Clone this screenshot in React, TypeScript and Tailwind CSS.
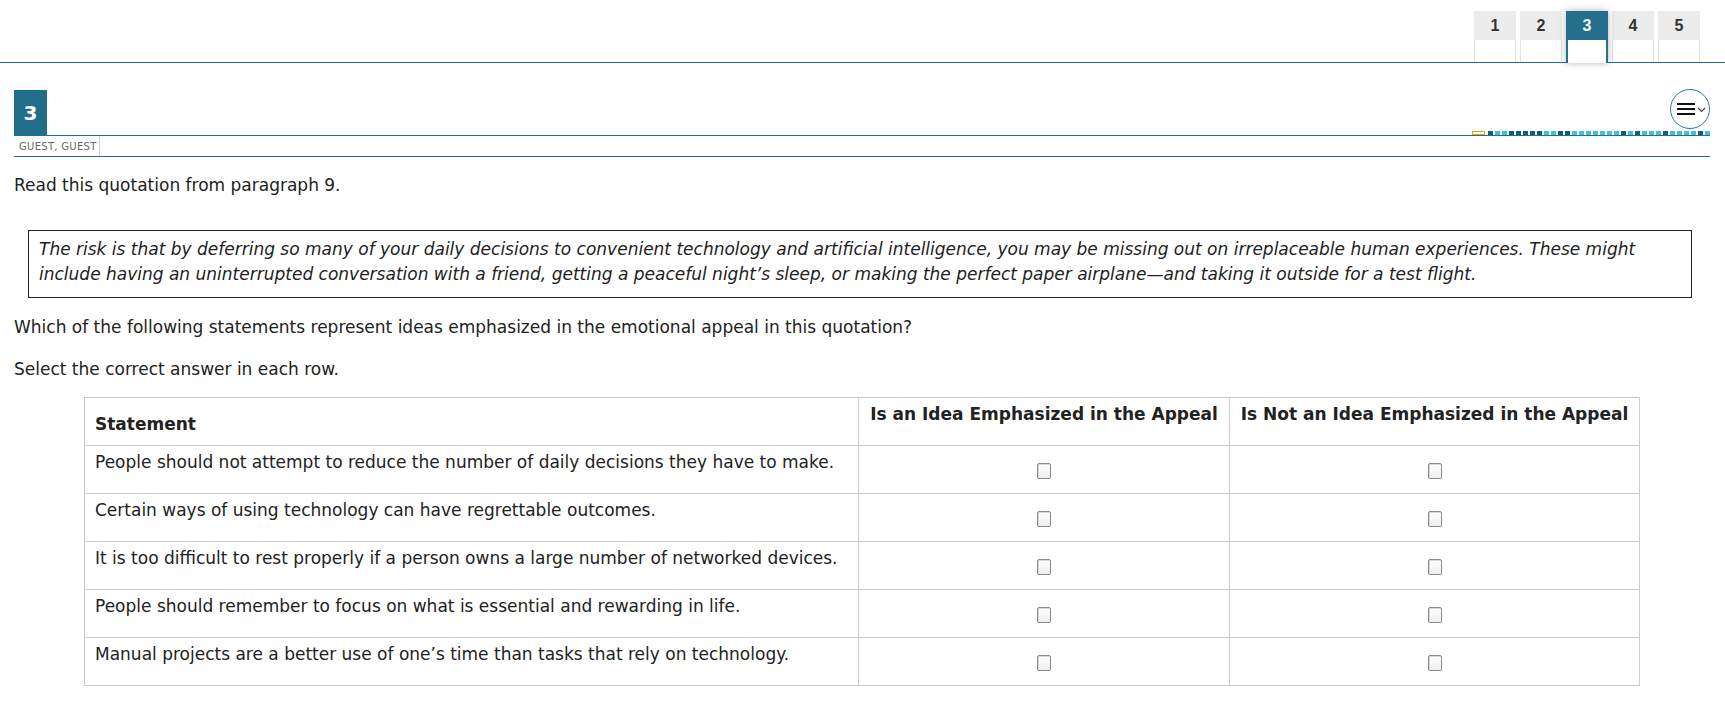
import React from 'react'

const tabs = [1, 2, 3, 4, 5]
const current = 3

// D = answered (dark), L = unanswered (light)
const progress = 'DLLDDDDDLLDDLLLLLLLDLDLLLDLLLLDL'

const statements = [
    'People should not attempt to reduce the number of daily decisions they have to make.',
    'Certain ways of using technology can have regrettable outcomes.',
    'It is too difficult to rest properly if a person owns a large number of networked devices.',
    'People should remember to focus on what is essential and rewarding in life.',
    'Manual projects are a better use of one\u2019s time than tasks that rely on technology.',
]

const Checkbox = () => (
    <span className="inline-block align-middle w-[14px] h-[16px] rounded-[2px] border border-[#8a8a8a] bg-gradient-to-b from-white to-[#eeeeee] shadow-[inset_1px_1px_0_#d8d8d8]" />
)

const MenuButton = () => (
    <div className="w-[40px] h-[40px] rounded-full border-[1.5px] border-[#2e7896] bg-white flex items-center justify-center pl-[2px]">
        <div className="flex flex-col gap-[3px]">
            <span className="block w-[18px] h-[2px] bg-[#111]" />
            <span className="block w-[18px] h-[2px] bg-[#111]" />
            <span className="block w-[18px] h-[2px] bg-[#111]" />
        </div>
        <svg width="9" height="6" viewBox="0 0 9 6" className="ml-[2px] mt-[1px]">
            <path d="M1 1l3.5 3.5L8 1" fill="none" stroke="#444" strokeWidth="1.2" />
        </svg>
    </div>
)

export default function App() {
    return (
        <div className="min-h-[720px] bg-white text-[#222] font-['DejaVu_Sans',Verdana,sans-serif]">
            {/* test tabs */}
            <div className="h-[63px] border-b border-[#1f6f8f] flex items-end justify-end gap-[4px] pr-[25px]">
                {tabs.map((t) =>
                    t === current ? (
                        <div
                            key={t}
                            className="w-[42px] h-[52px] -mb-px flex flex-col bg-white shadow-[0_0_7px_rgba(0,0,0,0.3)] relative z-10"
                        >
                            <div className="h-[29px] bg-[#236f8c] text-white flex items-center justify-center font-['Liberation_Sans',Arial,sans-serif] font-bold text-[16px]">
                                {t}
                            </div>
                            <div className="flex-1 border-x-2 border-[#236f8c] bg-white" />
                        </div>
                    ) : (
                        <div key={t} className="w-[42px] h-[51px] flex flex-col">
                            <div className="h-[29px] bg-[#ececec] text-[#333] flex items-center justify-center font-['Liberation_Sans',Arial,sans-serif] font-bold text-[16px]">
                                {t}
                            </div>
                            <div className="flex-1 border-x border-[#e3e3e3] bg-white" />
                        </div>
                    )
                )}
            </div>

            <div className="pl-[14px] pr-[15px]">
                {/* item header */}
                <div className="mt-[26px] flex items-end justify-between border-b border-[#1f6f8f]">
                    <div className="w-[33px] h-[45px] bg-[#216e8b] text-white font-bold text-[20px] flex items-center justify-center">
                        3
                    </div>
                    <div className="flex flex-col items-end gap-[2px]">
                        <MenuButton />
                        <div className="flex gap-[2px] items-end">
                            <span className="w-[13px] h-[4px] border border-[#f2a100] bg-white mr-[1px]" />
                            {progress.split('').map((c, i) => (
                                <span
                                    key={i}
                                    className={
                                        c === 'D'
                                            ? 'w-[5px] h-[4px] bg-[#0e5f7c]'
                                            : 'w-[5px] h-[4px] bg-[#3fc0dc]'
                                    }
                                />
                            ))}
                        </div>
                    </div>
                </div>
                <div className="h-[21px] flex border-b border-[#1f6f8f]">
                    <div className="w-[86px] border-r border-[#cfcfcf] pl-[5px] flex items-center text-[10px] text-[#666] tracking-[0.3px]">
                        GUEST, GUEST
                    </div>
                </div>

                {/* stem */}
                <div className="text-[17px] leading-[24px]">
                    <p className="mt-[16px]">Read this quotation from paragraph 9.</p>
                    <div className="mt-[33px] ml-[14px] mr-[18px] border border-[#222] pl-[10px] pr-[10px] pt-[6px] pb-[10px] italic leading-[25px]">
                        The risk is that by deferring so many of your daily decisions to convenient
                        technology and artificial intelligence, you may be missing out on
                        irreplaceable human experiences. These might include having an uninterrupted
                        conversation with a friend, getting a peaceful night&rsquo;s sleep, or making
                        the perfect paper airplane&mdash;and taking it outside for a test flight.
                    </div>
                    <p className="mt-[17px]">
                        Which of the following statements represent ideas emphasized in the
                        emotional appeal in this quotation?
                    </p>
                    <p className="mt-[18px]">Select the correct answer in each row.</p>

                    {/* answer table */}
                    <table className="mt-[16px] ml-[70px] w-[1555px] border-collapse table-fixed">
                        <colgroup>
                            <col className="w-[774px]" />
                            <col className="w-[371px]" />
                            <col className="w-[410px]" />
                        </colgroup>
                        <thead>
                            <tr className="h-[48px]">
                                <th className="border border-[#cccccc] text-left align-middle pl-[10px] pt-[4px] font-bold">
                                    Statement
                                </th>
                                <th className="border border-[#cccccc] align-top pt-[4px] font-bold">
                                    Is an Idea Emphasized in the Appeal
                                </th>
                                <th className="border border-[#cccccc] align-top pt-[4px] font-bold">
                                    Is Not an Idea Emphasized in the Appeal
                                </th>
                            </tr>
                        </thead>
                        <tbody>
                            {statements.map((s) => (
                                <tr key={s} className="h-[48px]">
                                    <td className="border border-[#cccccc] align-top pl-[10px] pt-[4px]">
                                        {s}
                                    </td>
                                    <td className="border border-[#cccccc] text-center align-middle">
                                        <Checkbox />
                                    </td>
                                    <td className="border border-[#cccccc] text-center align-middle">
                                        <Checkbox />
                                    </td>
                                </tr>
                            ))}
                        </tbody>
                    </table>
                </div>
            </div>
        </div>
    )
}
